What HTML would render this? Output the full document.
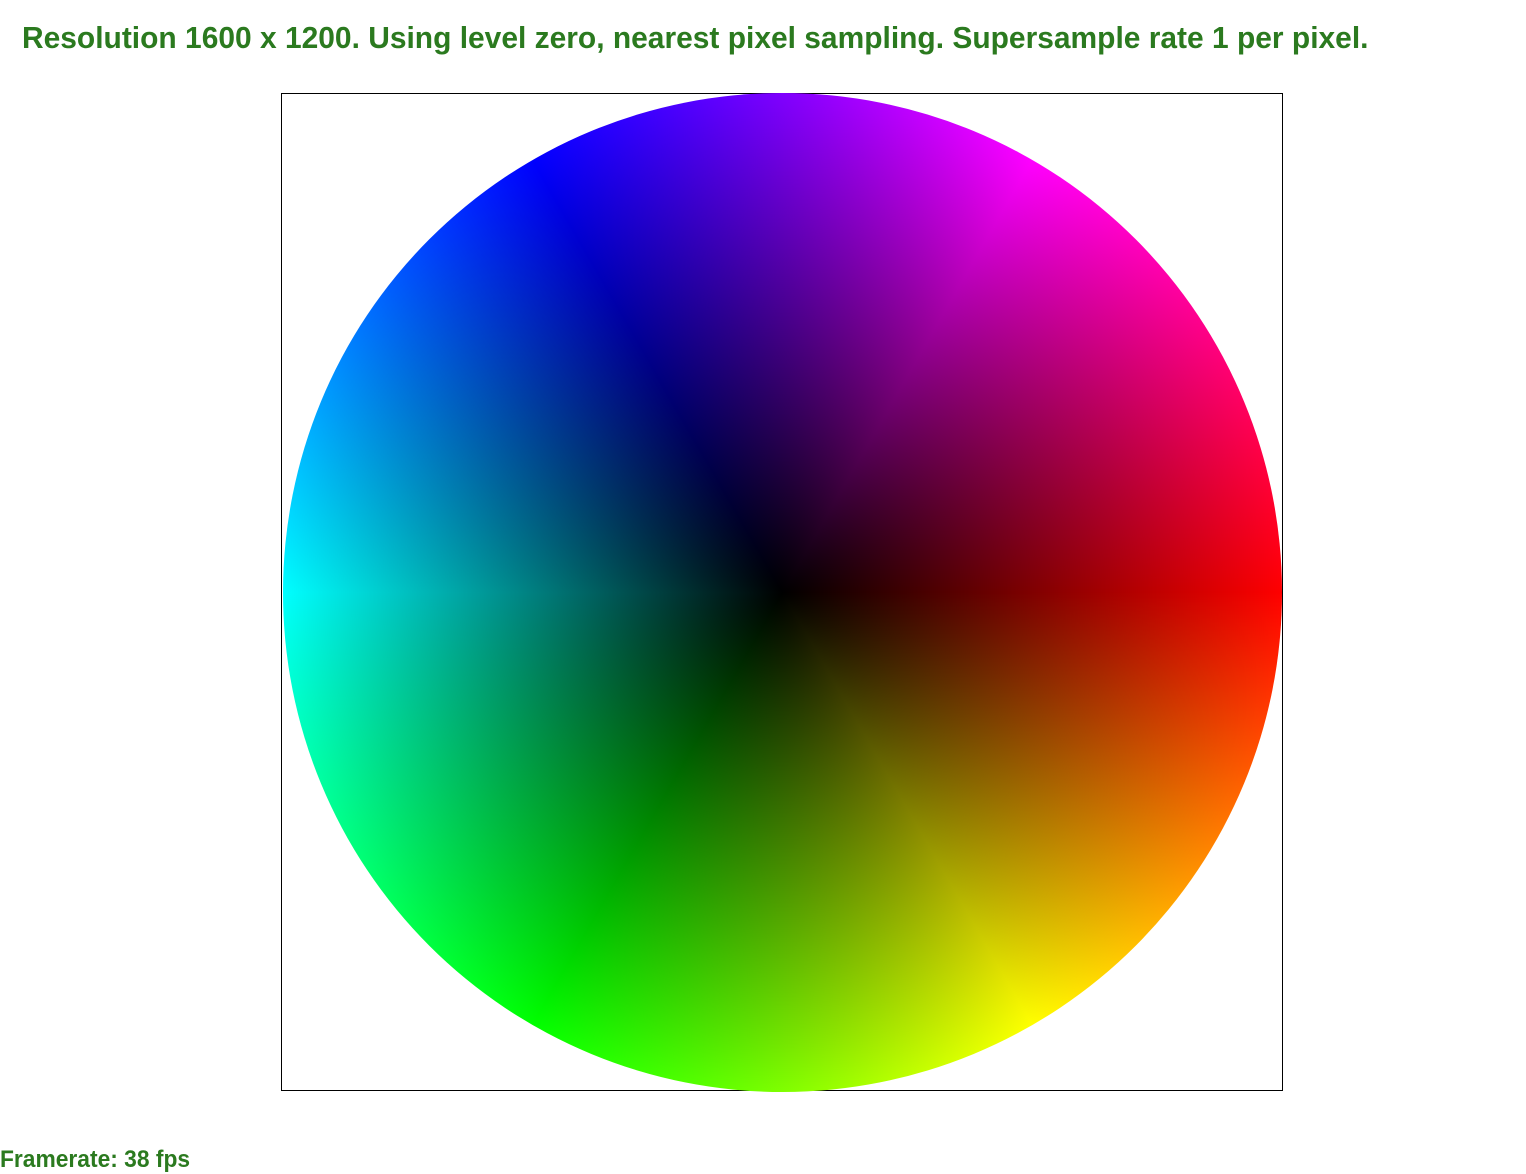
<!DOCTYPE html>
<html><head><meta charset="utf-8"><style>
html,body{margin:0;padding:0;background:#fff;width:1526px;height:1174px;overflow:hidden;position:relative;font-family:"Liberation Sans",sans-serif}
.t{position:absolute;left:22px;top:20px;font-size:31px;font-weight:bold;color:#2b7a1f;white-space:nowrap;transform-origin:0 0;transform:scaleX(0.966)}
.f{position:absolute;left:0;top:1146px;font-size:24px;font-weight:bold;color:#2b7a1f;white-space:nowrap;transform-origin:0 0;transform:scaleX(0.95)}
.box{position:absolute;left:281px;top:93px;width:1000px;height:996px;border:1px solid #000}
.c{position:absolute;left:283px;top:93px;width:999px;height:999px;border-radius:50%;
background:radial-gradient(circle closest-side,rgba(0,0,0,1) 0%,rgba(0,0,0,0) 100%),conic-gradient(from 90deg,#f00,#ff0,#0f0,#0ff,#00f,#f0f,#f00)}
</style></head><body>
<div class="t">Resolution 1600 x 1200. Using level zero, nearest pixel sampling. Supersample rate 1 per pixel.</div>
<div class="box"></div>
<div class="c"></div>
<div class="f">Framerate: 38 fps</div>
</body></html>
